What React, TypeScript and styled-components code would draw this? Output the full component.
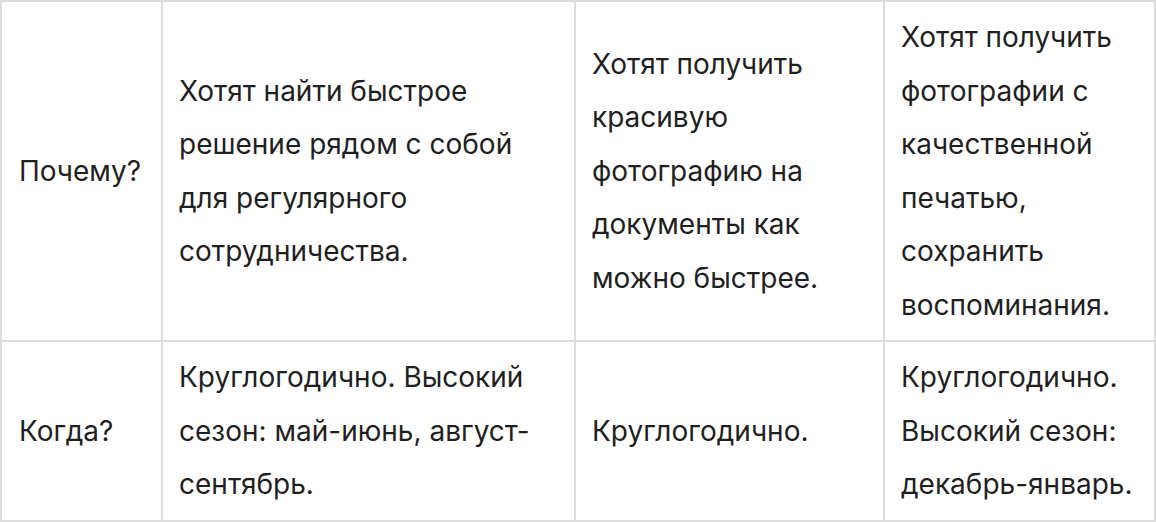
import styled, { createGlobalStyle } from "styled-components";

const Global = createGlobalStyle`
    body {
        margin: 0;
        background: #fff;
    }
`;

const Table = styled.table`
    width: 1156px;
    table-layout: fixed;
    border-collapse: separate;
    border-spacing: 0;
    border-left: 2px solid #dcdcdc;
    border-top: 2px solid #dcdcdc;
    font-family: Inter, "Noto Sans", sans-serif;
    font-size: 28px;
    line-height: 53.5px;
    color: #1f1f1f;
`;

const Col = styled.col<{ $w: number }>`
    width: ${(p) => p.$w}px;
`;

const Cell = styled.td`
    box-sizing: border-box;
    vertical-align: middle;
    padding: 9px 6px 8px 16px;
    border-right: 2px solid #dcdcdc;
    border-bottom: 2px solid #dcdcdc;
`;

const Label = styled(Cell)`
    padding-left: 17px;
`;

const rows = [
    {
        label: "Почему?",
        cells: [
            "Хотят найти быстрое решение рядом с собой для регулярного сотрудничества.",
            "Хотят получить красивую фотографию на документы как можно быстрее.",
            "Хотят получить фотографии с качественной печатью, сохранить воспоминания.",
        ],
    },
    {
        label: "Когда?",
        cells: [
            "Круглогодично. Высокий сезон: май-июнь, август-сентябрь.",
            "Круглогодично.",
            "Круглогодично. Высокий сезон: декабрь-январь.",
        ],
    },
];

export default function App() {
    return <>
        <Global />
        <Table>
            <colgroup>
                <Col $w={161} />
                <Col $w={413} />
                <Col $w={309} />
                <Col $w={271} />
            </colgroup>
            <tbody>
                {rows.map((r) => (
                    <tr key={r.label}>
                        <Label>{r.label}</Label>
                        {r.cells.map((c, i) => <Cell key={i}>{c}</Cell>)}
                    </tr>
                ))}
            </tbody>
        </Table>
    </>
}
